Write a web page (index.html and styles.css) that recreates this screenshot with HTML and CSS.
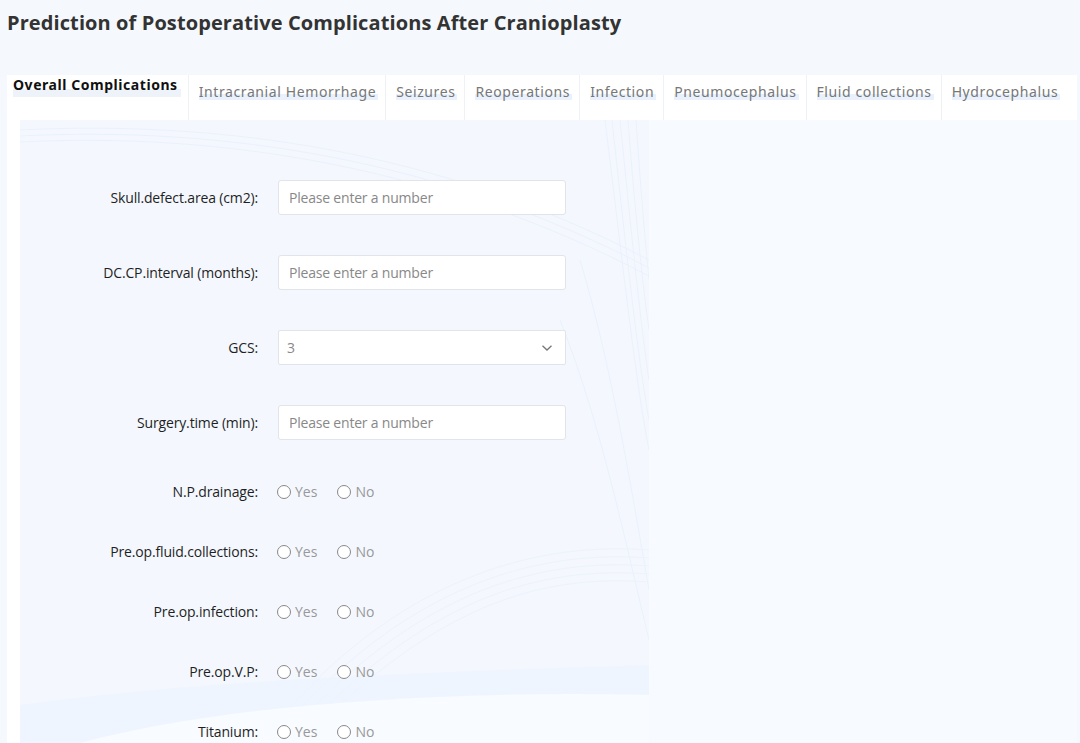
FILE: index.html
```html
<!DOCTYPE html>
<html lang="en">
<head>
<meta charset="utf-8">
<title>Prediction of Postoperative Complications After Cranioplasty</title>
<link rel="stylesheet" href="styles.css">
</head>
<body>
<h1 class="title">Prediction of Postoperative Complications After Cranioplasty</h1>
<div class="panel">
  <nav class="tabs">
    <div class="tab active"><span>Overall Complications</span></div>
    <div class="tab"><span>Intracranial Hemorrhage</span></div>
    <div class="tab"><span>Seizures</span></div>
    <div class="tab"><span>Reoperations</span></div>
    <div class="tab"><span>Infection</span></div>
    <div class="tab"><span>Pneumocephalus</span></div>
    <div class="tab"><span>Fluid collections</span></div>
    <div class="tab"><span>Hydrocephalus</span></div>
  </nav>
  <div class="body">
    <div class="form-area">
      <svg class="waves" width="629" height="623" viewBox="0 0 629 623" preserveAspectRatio="none">
        <g fill="none" stroke="#e9f2fc" stroke-width="1">
          <path d="M0 10 C200 0 420 30 629 140"/>
          <path d="M0 16 C200 6 420 38 629 148"/>
          <path d="M0 22 C200 12 420 46 629 156"/>
          <path d="M585 0 C600 120 615 260 629 330"/>
          <path d="M592 0 C605 120 618 240 629 300"/>
          <path d="M600 0 C610 100 620 200 629 260"/>
          <path d="M608 0 C614 80 622 160 629 210"/>
          <path d="M616 0 C620 60 625 120 629 160"/>
          <path d="M560 140 C590 240 610 360 629 470"/>
          <path d="M540 200 C580 300 605 420 629 520"/>
        </g>
        <g fill="none" stroke="#ecf3fc" stroke-width="1">
          <path d="M240 623 C360 470 500 420 629 430"/>
          <path d="M250 623 C370 478 500 428 629 438"/>
          <path d="M260 623 C380 486 500 436 629 446"/>
          <path d="M270 623 C390 494 500 444 629 454"/>
          <path d="M280 623 C400 502 500 452 629 462"/>
        </g>
        <path d="M0 585 C150 565 300 555 629 545 L629 623 L0 623 Z" fill="#ecf3fd" opacity="0.7"/>
        <path d="M60 623 C200 585 420 570 629 575 L629 623 Z" fill="#f8fbff"/>
      </svg>
      <form class="form">
        <div class="row field">
          <label class="lbl">Skull.defect.area (cm2):</label>
          <input class="inp" type="text" placeholder="Please enter a number">
        </div>
        <div class="row field">
          <label class="lbl">DC.CP.interval (months):</label>
          <input class="inp" type="text" placeholder="Please enter a number">
        </div>
        <div class="row field">
          <label class="lbl">GCS:</label>
          <div class="select">
            <span class="sel-val">3</span>
            <svg class="chev" width="12" height="8" viewBox="0 0 12 8"><path d="M1.5 1.8 L6 6 L10.5 1.8" fill="none" stroke="#777" stroke-width="1.3"/></svg>
          </div>
        </div>
        <div class="row field">
          <label class="lbl">Surgery.time (min):</label>
          <input class="inp" type="text" placeholder="Please enter a number">
        </div>
        <div class="row radio-row">
          <label class="lbl">N.P.drainage:</label>
          <div class="radios"><span class="opt"><i class="dot"></i>Yes</span><span class="opt"><i class="dot"></i>No</span></div>
        </div>
        <div class="row radio-row">
          <label class="lbl">Pre.op.fluid.collections:</label>
          <div class="radios"><span class="opt"><i class="dot"></i>Yes</span><span class="opt"><i class="dot"></i>No</span></div>
        </div>
        <div class="row radio-row">
          <label class="lbl">Pre.op.infection:</label>
          <div class="radios"><span class="opt"><i class="dot"></i>Yes</span><span class="opt"><i class="dot"></i>No</span></div>
        </div>
        <div class="row radio-row">
          <label class="lbl">Pre.op.V.P:</label>
          <div class="radios"><span class="opt"><i class="dot"></i>Yes</span><span class="opt"><i class="dot"></i>No</span></div>
        </div>
        <div class="row radio-row">
          <label class="lbl">Titanium:</label>
          <div class="radios"><span class="opt"><i class="dot"></i>Yes</span><span class="opt"><i class="dot"></i>No</span></div>
        </div>
      </form>
    </div>
  </div>
</div>
</body>
</html>
```
FILE: styles.css
```css
html, body {
  margin: 0;
  padding: 0;
}
body {
  background: #f5f9fd;
  font-family: "Noto Sans", "Open Sans", sans-serif;
  color: #333;
  height: 743px;
  overflow: hidden;
}
.title {
  margin: 0;
  padding: 9px 0 0 7px;
  font-family: "Open Sans", sans-serif;
  font-size: 20px;
  font-weight: 700;
  letter-spacing: 0.1px;
  color: #333;
  line-height: 28px;
  height: 68px;
  box-sizing: border-box;
}
.panel {
  margin: 7px 3px 0 7px;
  background: #ffffff;
}
.tabs {
  display: flex;
  height: 45px;
  align-items: flex-start;
  white-space: nowrap;
  overflow: hidden;
}
.tab {
  flex: none;
  padding: 7px 7px 0 10px;
  height: 45px;
  box-sizing: border-box;
  border-right: 1px solid #eef2f7;
  font-size: 14px;
  letter-spacing: 0.6px;
  color: #777;
}
.tab span {
  display: inline-block;
  line-height: 20px;
  background: linear-gradient(to bottom, transparent 62%, #e8f1fc 62%, #e8f1fc 88%, transparent 88%);
  padding-right: 2px;
}
.tab.active {
  padding: 0 7px 0 6px;
  color: #111;
  font-weight: 700;
  letter-spacing: 0.55px;
}
.tab.active span {
  line-height: 18px;
  background: linear-gradient(to bottom, transparent 60%, #eef3fa 60%, #eef3fa 100%);
  padding: 0 3px 3px 0;
}
.tab:last-child {
  border-right: 0;
}
.body {
  padding-left: 13px;
  background: linear-gradient(to right, #ffffff 0 13px, #f7fbff 13px);
}
.form-area {
  position: relative;
  width: 629px;
  height: 623px;
  background: #f4f8fe;
  overflow: hidden;
}
.waves {
  position: absolute;
  left: 0;
  top: 0;
}
.form {
  position: relative;
  padding-top: 60px;
  display: flex;
  flex-direction: column;
}
.row {
  display: grid;
  grid-template-columns: 238px 288px;
  column-gap: 20px;
  align-items: center;
}
.field {
  height: 35px;
  margin-bottom: 40px;
}
.radio-row {
  height: 20px;
  margin-bottom: 40px;
}
.field:nth-child(4) {
  margin-bottom: 41px;
}
.lbl {
  text-align: right;
  font-size: 14px;
  color: #1f1f1f;
  font-family: "Open Sans", sans-serif;
  letter-spacing: -0.15px;
}
.inp, .select {
  width: 288px;
  height: 35px;
  box-sizing: border-box;
  border: 1px solid #e1e4e8;
  border-radius: 3px;
  background: #fff;
  padding: 0 10px;
  font-size: 14px;
  font-family: "Open Sans", sans-serif;
  color: #333;
  outline: none;
}
.inp::placeholder {
  color: #888;
  letter-spacing: -0.2px;
}
.select {
  display: flex;
  align-items: center;
  justify-content: space-between;
  padding: 0 12px 0 8px;
  border-radius: 2px;
}
.sel-val {
  color: #888;
}
.radios {
  display: flex;
  gap: 20px;
  margin-left: -1px;
}
.opt {
  display: flex;
  align-items: center;
  font-size: 14px;
  color: #999;
  font-family: "Open Sans", sans-serif;
}
.dot {
  display: inline-block;
  width: 12px;
  height: 12px;
  border: 1px solid #888;
  border-radius: 50%;
  background: #fff;
  margin-right: 4px;
  margin-top: 2px;
}
```
